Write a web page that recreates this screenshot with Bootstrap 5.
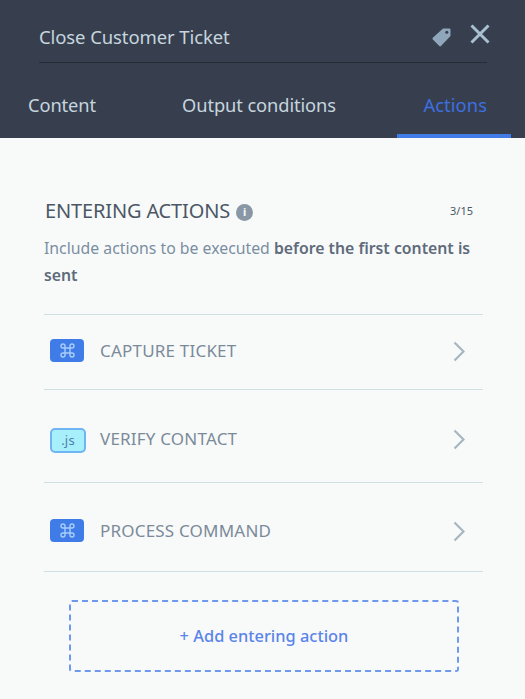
<!DOCTYPE html>
<html lang="en">
<head>
    <meta charset="UTF-8">
    <meta name="viewport" content="width=device-width, initial-scale=1.0">
    <title>Close Customer Ticket</title>
    <link href="https://cdn.jsdelivr.net/npm/bootstrap@5.3.0/dist/css/bootstrap.min.css" rel="stylesheet">
    <style>
        html, body { height: 100%; }
        body { background: #f8fafa; font-family: "Noto Sans", sans-serif; overflow: hidden; }
        .panel-head { background: #373f4f; height: 138px; color: #c6d5de; }
        .title-row { margin: 0 38px 0 39px; height: 63px; border-bottom: 1px solid #262c36; padding-top: 12px; }
        .title-text { font-size: 18.5px; letter-spacing: -.1px; }
        .title-icons { margin-right: -4px; }
        .icon-x { margin-bottom: 6px; }
        .tab-row { height: 75px; padding: 0 14px 0 28px; }
        .tab-item { font-size: 18.3px; letter-spacing: -.1px; color: #c6d5de; text-decoration: none; padding-top: 9px; height: 100%; display: flex; align-items: center; }
        .tab-gap { margin-left: 86px; }
        .tab-item.is-on { color: #3d6fe0; border-bottom: 4px solid #3f7ce8; padding: 13px 24px 0 26px; margin-left: auto; letter-spacing: .1px; }
        .panel-body { padding: 61px 42px 0 44px; }
        .sect-title { font-size: 20px; color: #4c5766; margin: 0 0 0 1px; letter-spacing: -.15px; }
        .info-dot { width: 17px; height: 17px; border-radius: 50%; background: #8a98a6; color: #f8fafa; font-size: 11px; font-weight: 700; margin-left: 6px; margin-top: 3px; }
        .sect-count { font-size: 11px; color: #4c5766; padding-right: 10px; }
        .sect-desc { font-size: 15.8px; line-height: 27px; color: #7a8ea1; margin: 12px 0 25px; }
        .sect-desc b { color: #5f6b7b; font-weight: 600; }
        .action-row { border-top: 1px solid #cfe0e4; color: #7b8a99; font-size: 17px; letter-spacing: .2px; padding-left: 6px; padding-right: 18px; }
        .action-row.last-row { border-bottom: 1px solid #cfe0e4; }
        .row-a { height: 75px; padding-bottom: 2px; }
        .row-b { height: 93px; padding-top: 6px; }
        .row-c { height: 90px; padding-top: 8px; }
        .cmd-badge { width: 34px; height: 23px; border-radius: 4px; background: #3f7ce8; margin-right: 16px; margin-bottom: 2px; }
        .js-badge { width: 36px; height: 25px; border-radius: 5px; background: #a8effc; border: 2px solid #6fb4f3; color: #4d7fa8; font-size: 13px; margin-right: 14px; margin-top: 3px; }
        .add-box { margin: 28px 24px 0 25px; height: 72px; border: 2px dashed #6f99ec; border-radius: 3px; color: #5a84ea; font-size: 16.4px; font-weight: 500; text-decoration: none; }
    </style>
</head>
<body>
    <!-- Header -->
    <div class="panel-head">
        <div class="title-row d-flex align-items-center justify-content-between">
            <span class="title-text">Close Customer Ticket</span>
            <div class="title-icons d-flex align-items-center gap-3">
                <svg width="22" height="22" viewBox="0 0 22 22"><path d="M12 2.5h6.5a1 1 0 0 1 1 1V10L10 20a1.2 1.2 0 0 1-1.7 0L1.8 13.4a1.2 1.2 0 0 1 0-1.7z" fill="#8fa6bb"/><circle cx="15.8" cy="6.2" r="1.5" fill="#373f4f"/></svg>
                <svg class="icon-x" width="22" height="22" viewBox="0 0 22 22"><path d="M2.5 2.5l17 17M19.5 2.5l-17 17" stroke="#a9c0d2" stroke-width="3"/></svg>
            </div>
        </div>
        <div class="tab-row d-flex align-items-stretch">
            <a class="tab-item" href="#">Content</a>
            <a class="tab-item tab-gap" href="#">Output conditions</a>
            <a class="tab-item is-on" href="#">Actions</a>
        </div>
    </div>

    <div class="panel-body">
        <div class="d-flex align-items-center">
            <h2 class="sect-title fw-normal">ENTERING ACTIONS</h2>
            <span class="info-dot d-flex align-items-center justify-content-center">i</span>
            <span class="sect-count ms-auto">3/15</span>
        </div>
        <p class="sect-desc">Include actions to be executed <b>before the first content is</b> <b>sent</b></p>

        <div class="action-row row-a d-flex align-items-center justify-content-between">
            <div class="d-flex align-items-center">
                <span class="cmd-badge d-flex align-items-center justify-content-center">
                    <svg width="17" height="17" viewBox="0 0 17 17" fill="none" stroke="#a9cdf8" stroke-width="1.4"><path d="M6 6h5v5H6zM6 6H4a2 2 0 1 1 2-2zM11 6V4a2 2 0 1 1 2 2zM11 11h2a2 2 0 1 1-2 2zM6 11v2a2 2 0 1 1-2-2z"/></svg>
                </span>
                <span>CAPTURE TICKET</span>
            </div>
            <svg width="12" height="21" viewBox="0 0 12 21" fill="none"><path d="M1.5 1.5l9 9-9 9" stroke="#a6b6c0" stroke-width="2.2"/></svg>
        </div>
        <div class="action-row row-b d-flex align-items-center justify-content-between">
            <div class="d-flex align-items-center">
                <span class="js-badge d-flex align-items-center justify-content-center">.js</span>
                <span>VERIFY CONTACT</span>
            </div>
            <svg width="12" height="21" viewBox="0 0 12 21" fill="none"><path d="M1.5 1.5l9 9-9 9" stroke="#a6b6c0" stroke-width="2.2"/></svg>
        </div>
        <div class="action-row row-c last-row d-flex align-items-center justify-content-between">
            <div class="d-flex align-items-center">
                <span class="cmd-badge d-flex align-items-center justify-content-center">
                    <svg width="17" height="17" viewBox="0 0 17 17" fill="none" stroke="#a9cdf8" stroke-width="1.4"><path d="M6 6h5v5H6zM6 6H4a2 2 0 1 1 2-2zM11 6V4a2 2 0 1 1 2 2zM11 11h2a2 2 0 1 1-2 2zM6 11v2a2 2 0 1 1-2-2z"/></svg>
                </span>
                <span>PROCESS COMMAND</span>
            </div>
            <svg width="12" height="21" viewBox="0 0 12 21" fill="none"><path d="M1.5 1.5l9 9-9 9" stroke="#a6b6c0" stroke-width="2.2"/></svg>
        </div>

        <a class="add-box d-flex align-items-center justify-content-center" href="#">+ Add entering action</a>
    </div>

    <script src="https://cdn.jsdelivr.net/npm/bootstrap@5.3.0/dist/js/bootstrap.bundle.min.js"></script>
</body>
</html>
